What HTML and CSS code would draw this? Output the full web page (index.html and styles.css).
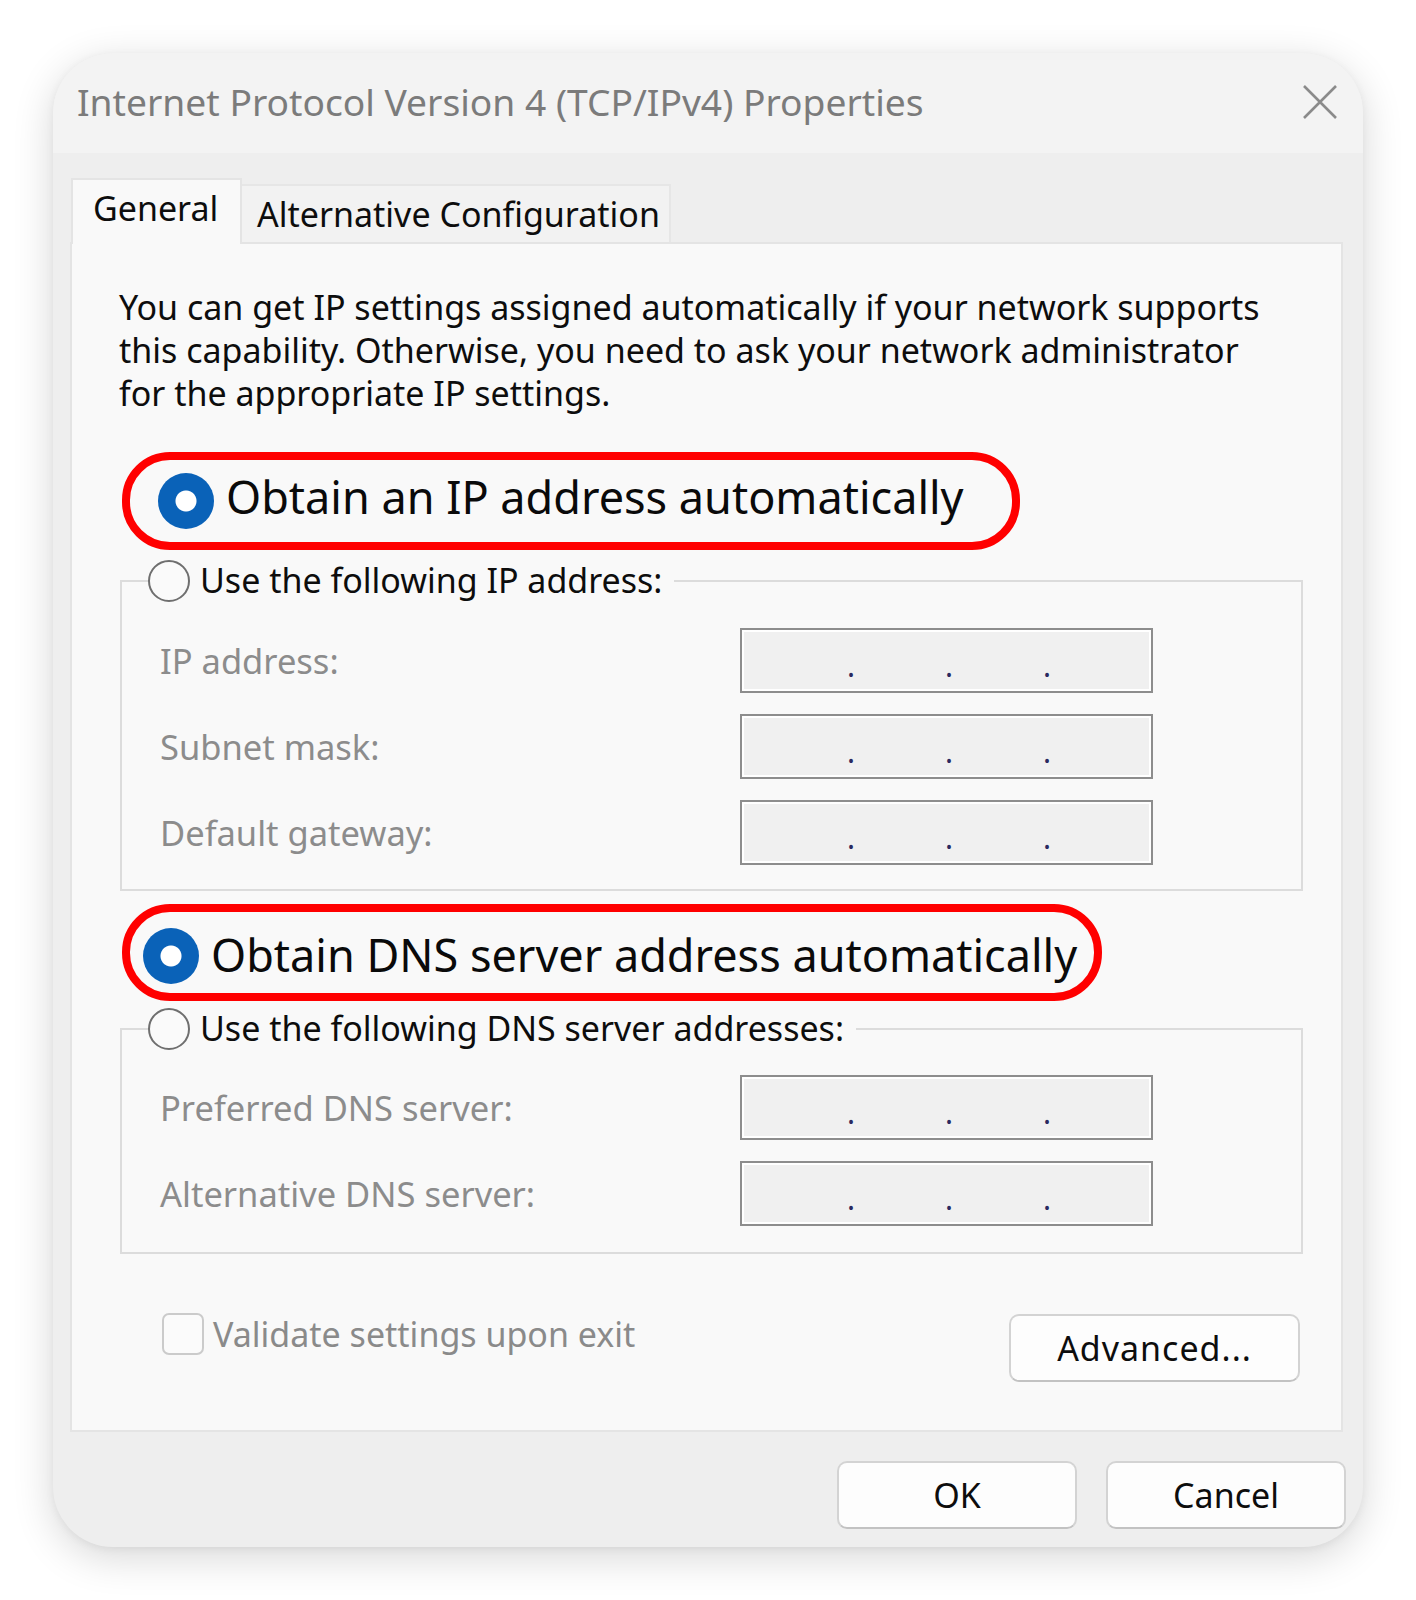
FILE: index.html
```html
<!DOCTYPE html>
<html lang="en">
<head>
<meta charset="utf-8">
<title>Internet Protocol Version 4 (TCP/IPv4) Properties</title>
<link rel="stylesheet" href="styles.css">
</head>
<body>
<div class="stage">
  <div class="dialog">
    <div class="titlebar">
      <span class="title">Internet Protocol Version 4 (TCP/IPv4) Properties</span>
      <svg class="close" width="36" height="36" viewBox="0 0 36 36"><path d="M2 2L34 34M34 2L2 34"/></svg>
    </div>
    <div class="body">
      <div class="tabs">
        <div class="tab active">General</div>
        <div class="tab">Alternative Configuration</div>
      </div>
      <div class="panel">
        <p class="intro">You can get IP settings assigned automatically if your network supports<br>this capability. Otherwise, you need to ask your network administrator<br>for the appropriate IP settings.</p>

        <div class="pill pill-ip"><span class="radio on"></span><span class="pill-text">Obtain an IP address automatically</span></div>

        <fieldset class="group group-ip">
          <legend><span class="radio"></span><span class="legend-text">Use the following IP address:</span></legend>
          <div class="row"><span class="label">IP address:</span><div class="ipbox"><span>.</span><span>.</span><span>.</span></div></div>
          <div class="row"><span class="label">Subnet mask:</span><div class="ipbox"><span>.</span><span>.</span><span>.</span></div></div>
          <div class="row"><span class="label">Default gateway:</span><div class="ipbox"><span>.</span><span>.</span><span>.</span></div></div>
        </fieldset>

        <div class="pill pill-dns"><span class="radio on"></span><span class="pill-text">Obtain DNS server address automatically</span></div>

        <fieldset class="group group-dns">
          <legend><span class="radio"></span><span class="legend-text">Use the following DNS server addresses:</span></legend>
          <div class="row"><span class="label">Preferred DNS server:</span><div class="ipbox"><span>.</span><span>.</span><span>.</span></div></div>
          <div class="row"><span class="label">Alternative DNS server:</span><div class="ipbox"><span>.</span><span>.</span><span>.</span></div></div>
        </fieldset>

        <div class="footer-row">
          <div class="check"><span class="checkbox"></span><span class="check-text">Validate settings upon exit</span></div>
          <div class="btn btn-adv">Advanced...</div>
        </div>
      </div>
      <div class="actions">
        <div class="btn btn-action">OK</div>
        <div class="btn btn-action">Cancel</div>
      </div>
    </div>
  </div>
</div>
</body>
</html>
```

FILE: styles.css
```css
* { box-sizing: border-box; }
html, body { margin: 0; padding: 0; background: #ffffff; }
body {
  font-family: "Noto Sans", "Open Sans", "DejaVu Sans", sans-serif;
  color: #111;
}
.stage {
  padding: 53px 0 0 53px;
  width: 1416px;
  height: 1600px;
}
.dialog {
  width: 1310px;
  height: 1494px;
  border-radius: 60px;
  background: #eeeeee;
  box-shadow: 0 10px 40px rgba(0, 0, 0, 0.16), 0 2px 8px rgba(0, 0, 0, 0.05);
  overflow: hidden;
  display: flex;
  flex-direction: column;
}
.titlebar {
  flex: none;
  height: 100px;
  background: #f3f3f3;
  display: flex;
  align-items: center;
  justify-content: space-between;
  padding: 0 25px 0 24px;
}
.title {
  font-size: 37.2px;
  color: #7b7b7b;
  white-space: nowrap;
  margin-top: -4px;
}
.close { margin-top: -2px; }
.close path { stroke: #8a8a8a; stroke-width: 2.6; fill: none; }

.body {
  flex: 1;
  min-height: 0;
  padding: 25px 20px 17px 17px;
  display: flex;
  flex-direction: column;
}
.tabs {
  flex: none;
  display: flex;
  align-items: flex-end;
  padding-left: 1px;
  height: 64px;
  position: relative;
  z-index: 1;
}
.tab {
  display: flex;
  align-items: center;
  font-size: 34px;
  color: #0d0d0d;
  white-space: nowrap;
}
.tab.active {
  height: 66px;
  margin-bottom: -2px;
  width: 171px;
  padding-left: 20px;
  padding-bottom: 8px;
  background: #f9f9f9;
  border: 2px solid #e4e4e4;
  border-bottom: none;
}
.tab:not(.active) {
  height: 58px;
  width: 429px;
  padding-left: 15px;
  background: #f2f2f2;
  border: 2px solid #e6e6e6;
  border-left: none;
  border-bottom: none;
}
.panel {
  flex: none;
  background: #f9f9f9;
  border: 2px solid #e4e4e4;
  padding: 0 38px 48px 46px;
  display: flex;
  flex-direction: column;
}
.intro {
  margin: 42px 0 0 1px;
  font-size: 34px;
  line-height: 43px;
  color: #0d0d0d;
  white-space: nowrap;
}
.pill {
  flex: none;
  display: flex;
  align-items: center;
  border: 8px solid #ff0000;
  border-radius: 48px;
  height: 98px;
  margin-left: 4px;
  background: #f9f9f9;
}
.pill-ip { width: 898px; margin-top: 37px; padding-left: 28px; }
.pill-ip .pill-text { margin-top: -10px; }
.pill-dns { width: 980px; margin-top: 13px; height: 97px; padding-left: 13px; padding-top: 7px; }
.pill-dns .pill-text { margin-top: -4px; }
.pill-text {
  font-size: 45px;
  color: #0a0a0a;
  white-space: nowrap;
  margin-left: 12px;
}
.radio {
  display: inline-block;
  flex: none;
  width: 42px;
  height: 42px;
  border-radius: 50%;
  border: 2px solid #6f6f6f;
  background: #fafafa;
}
.radio.on {
  width: 56px;
  height: 56px;
  border: none;
  background: radial-gradient(circle, #ffffff 0 10px, #0a62b8 11px);
}
.group {
  flex: none;
  margin: 10px 0 0 2px;
  width: 1183px;
  border: 2px solid #dcdcdc;
  padding: 26px 0 24px 38px;
}
.group-dns { margin-top: 7px; padding-top: 25px; padding-bottom: 26px; }
.group legend {
  display: flex;
  align-items: center;
  padding: 0 12px 0 0;
  margin-left: -12px;
  height: 42px;
}
.legend-text {
  font-size: 34px;
  color: #0d0d0d;
  margin-left: 10px;
  white-space: nowrap;
  margin-top: -2px;
}
.row {
  display: flex;
  align-items: center;
  height: 65px;
  margin-bottom: 21px;
}
.row:last-child { margin-bottom: 0; }
.label {
  width: 580px;
  font-size: 34.5px;
  color: #8c8c8c;
  white-space: nowrap;
}
.ipbox {
  width: 413px;
  height: 65px;
  border: 2px solid #8d8d8d;
  box-shadow: inset 0 0 0 2px #ffffff;
  background: #f0f0f0;
  display: flex;
  align-items: center;
  padding-left: 105px;
  gap: 90px;
  font-size: 30px;
  color: #2a2a60;
}
.ipbox span { width: 8px; text-align: center; margin-top: 10px; }
.footer-row {
  flex: none;
  margin-top: 60px;
  display: flex;
  justify-content: space-between;
  align-items: flex-start;
}
.check {
  display: flex;
  align-items: center;
  margin-left: 44px;
  margin-top: -3px;
}
.checkbox {
  width: 42px;
  height: 42px;
  border: 2px solid #cbcbcb;
  border-radius: 7px;
  background: #fbfbfb;
}
.check-text {
  font-size: 34px;
  color: #8a8a8a;
  margin-left: 9px;
  white-space: nowrap;
}
.btn {
  display: flex;
  align-items: center;
  justify-content: center;
  height: 68px;
  background: #fdfdfd;
  border: 2px solid #d3d3d3;
  border-bottom-color: #c2c2c2;
  border-radius: 10px;
  font-size: 34px;
  color: #0d0d0d;
}
.btn-adv { width: 291px; margin-right: 3px; letter-spacing: 1px; }
.actions {
  flex: none;
  margin-top: 29px;
  display: flex;
  justify-content: flex-end;
  gap: 29px;
  margin-right: -3px;
}
.btn-action { width: 240px; }
```
